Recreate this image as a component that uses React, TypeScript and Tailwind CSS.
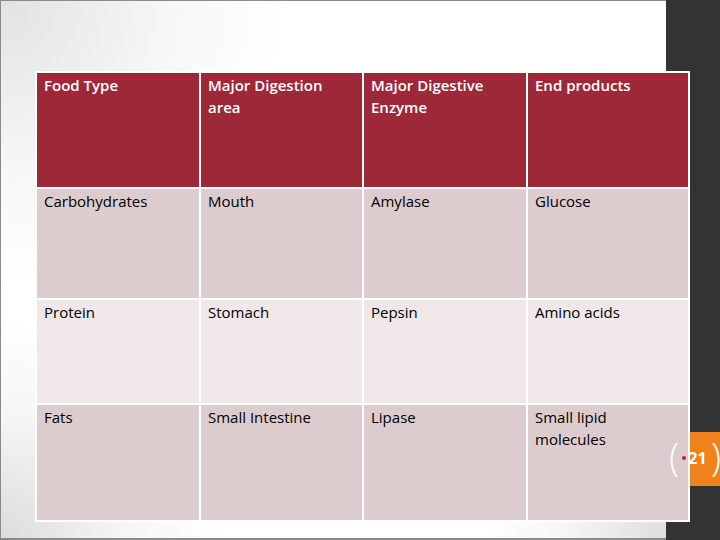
const header = ['Food Type', 'Major Digestion area', 'Major Digestive Enzyme', 'End products']

const rows: { cells: string[]; height: string; bg: string }[] = [
  { cells: ['Carbohydrates', 'Mouth', 'Amylase', 'Glucose'], height: 'h-[109px]', bg: 'bg-[#ddcccd]' },
  { cells: ['Protein', 'Stomach', 'Pepsin', 'Amino acids'], height: 'h-[103px]', bg: 'bg-[#efe7e8]' },
  { cells: ['Fats', 'Small Intestine', 'Lipase', 'Small lipid molecules'], height: 'h-[115px]', bg: 'bg-[#ddcccd]' },
]

const cellText = 'px-[7px] pt-[1px] text-[15px] leading-[22px]'

function FoodTable() {
  return (
    <div className="relative z-10 grid w-[655px] grid-cols-[162px_161px_162px_160px] gap-[2px] bg-white p-[2px] font-['Open_Sans',sans-serif]">
      {header.map((text) => (
        <div key={text} className={`h-[114px] bg-[#9d2838] font-semibold text-white ${cellText}`}>
          {text}
        </div>
      ))}
      {rows.map((row) =>
        row.cells.map((text, i) => (
          <div key={row.cells[0] + i} className={`${row.height} ${row.bg} text-black ${cellText}`}>
            {text}
          </div>
        )),
      )}
    </div>
  )
}

function PageBadge() {
  return (
    <div className="absolute left-[666px] top-[432px] z-20 h-[54px] w-[54px]">
      <div className="absolute right-0 top-0 h-[54px] w-[30px] bg-[#f0821c]" />
      <div className="absolute left-[3px] top-[5px] flex items-center font-['Open_Sans',sans-serif] text-white">
        <span className="text-[38px] font-light leading-none">(</span>
        <span className="ml-[3px] mr-[2px] mt-[4px] h-[4px] w-[4px] rounded-full bg-[#b3262f]" />
        <span className="mt-[4px] text-[16px] font-bold leading-none">21</span>
        <span className="ml-[4px] text-[38px] font-light leading-none">)</span>
      </div>
    </div>
  )
}

export default function App() {
  return (
    <div className="relative flex h-[540px] w-[720px] overflow-hidden bg-white">
      <div className="h-[540px] w-[666px] shrink-0 border-t border-b-2 border-l border-[#8a8a8a] bg-[radial-gradient(circle_at_0%_0%,#e2e2e2_0%,#f7f7f7_20%,transparent_34%),radial-gradient(circle_at_0%_100%,#dcdcdc_0%,#f5f5f5_14%,transparent_26%),radial-gradient(circle_at_100%_100%,#dedede_0%,#f6f6f6_12%,transparent_22%),linear-gradient(#ffffff,#ffffff)] pl-[34px] pt-[70px]">
        <FoodTable />
      </div>
      <div className="h-[540px] w-[54px] shrink-0 bg-[#333333]" />
      <PageBadge />
    </div>
  )
}
